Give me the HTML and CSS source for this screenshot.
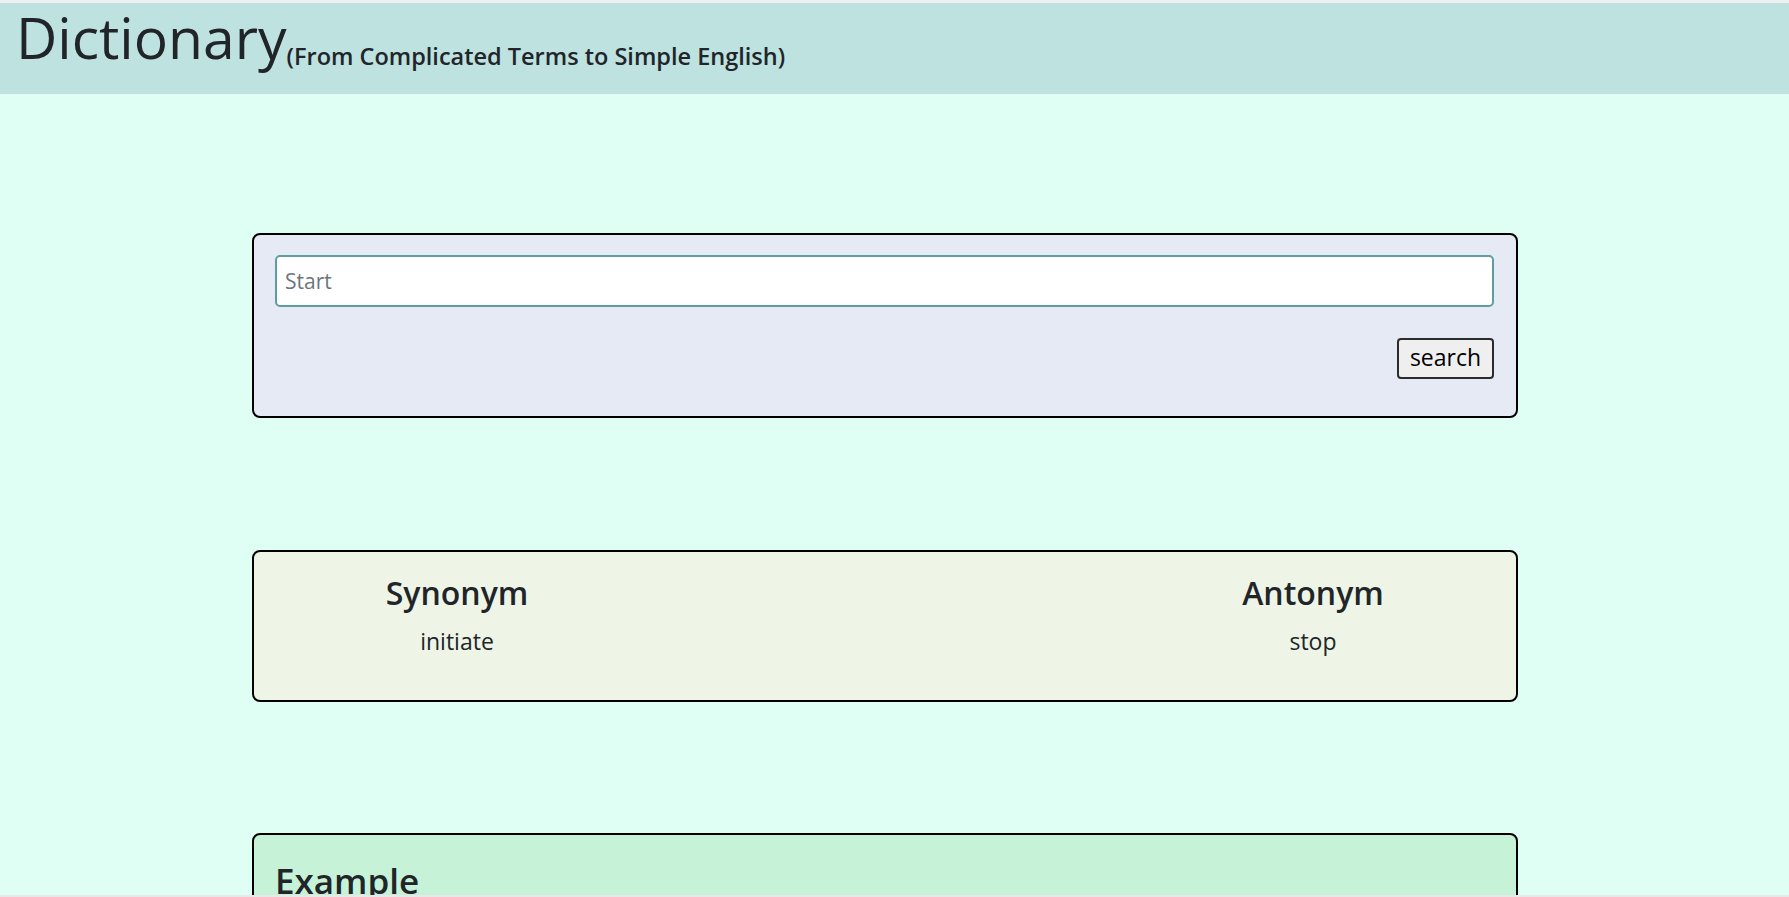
FILE: index.html
```html
<!DOCTYPE html>
<html lang="en">
<head>
<meta charset="utf-8">
<title>Dictionary</title>
<link rel="stylesheet" href="styles.css">
</head>
<body>
<header class="topbar">
  <h1 class="title">Dictionary<span class="subtitle">(From Complicated Terms to Simple English)</span></h1>
</header>
<main class="content">
  <section class="card card-search">
    <input class="search-input" type="text" placeholder="Start">
    <div class="search-actions">
      <button class="search-btn" type="button">search</button>
    </div>
  </section>
  <section class="card card-words">
    <div class="word-col">
      <h2 class="word-head">Synonym</h2>
      <p class="word-val">initiate</p>
    </div>
    <div class="word-col word-col-right">
      <h2 class="word-head">Antonym</h2>
      <p class="word-val">stop</p>
    </div>
  </section>
  <section class="card card-example">
    <h2 class="example-head">Example</h2>
  </section>
</main>
<div class="bottom-edge"></div>
</body>
</html>
```
FILE: styles.css
```css
* { box-sizing: border-box; }
html, body { margin: 0; padding: 0; }
body {
  background: #e0fff4;
  font-family: "Open Sans", "Noto Sans", sans-serif;
  color: #212529;
  overflow: hidden;
  height: 897px;
}
.topbar {
  background: #bde2e0;
  border-top: 3px solid #f0f0f0;
  height: 94px;
  padding: 0 0 0 16px;
}
.title {
  margin: 0;
  font-weight: 500;
  font-size: 57px;
  line-height: 68px;
}
.subtitle {
  font-size: 23.5px;
  vertical-align: -6px;
  font-weight: 600;
}
.content {
  display: flex;
  flex-direction: column;
  padding-left: 252px;
  width: 1518px;
}
.card {
  border: 2px solid #000;
  border-radius: 8px;
}
.card-search {
  margin-top: 139px;
  background: #e6eaf4;
  padding: 20px 22px 36px 21px;
  height: 185px;
}
.search-input {
  display: block;
  width: 100%;
  height: 52px;
  border: 2px solid #5f9ea0;
  border-radius: 5px;
  background: #fff;
  font-family: inherit;
  font-size: 21px;
  padding: 0 8px;
  outline: none;
}
.search-input::placeholder { color: #6c757d; }
.search-actions {
  display: flex;
  justify-content: flex-end;
  margin-top: 31px;
}
.search-btn {
  width: 97px;
  height: 41px;
  border: 2px solid #2b2b2b;
  border-radius: 4px;
  background: #efefef;
  font-family: inherit;
  font-size: 23px;
  color: #000;
  padding: 0 0 3px;
}
.card-words {
  margin-top: 132px;
  background: #eef5e6;
  height: 152px;
  padding: 20px 0 0;
  display: grid;
  grid-template-columns: 406px 1fr 406px;
}
.word-col {
  display: flex;
  flex-direction: column;
  align-items: center;
}
.word-col-right { grid-column: 3; }
.word-head {
  margin: 0;
  font-size: 32px;
  font-weight: 600;
  line-height: 42px;
}
.word-val {
  margin: 12px 0 0;
  font-size: 23px;
  line-height: 30px;
}
.card-example {
  margin-top: 131px;
  background: #c6f2d8;
  height: 200px;
  padding: 22px 21px;
}
.example-head {
  margin: 0;
  font-size: 35px;
  font-weight: 600;
  line-height: 48px;
}
.bottom-edge {
  position: fixed;
  left: 0;
  right: 0;
  bottom: 0;
  height: 2px;
  background: #e8e8e8;
}
```
